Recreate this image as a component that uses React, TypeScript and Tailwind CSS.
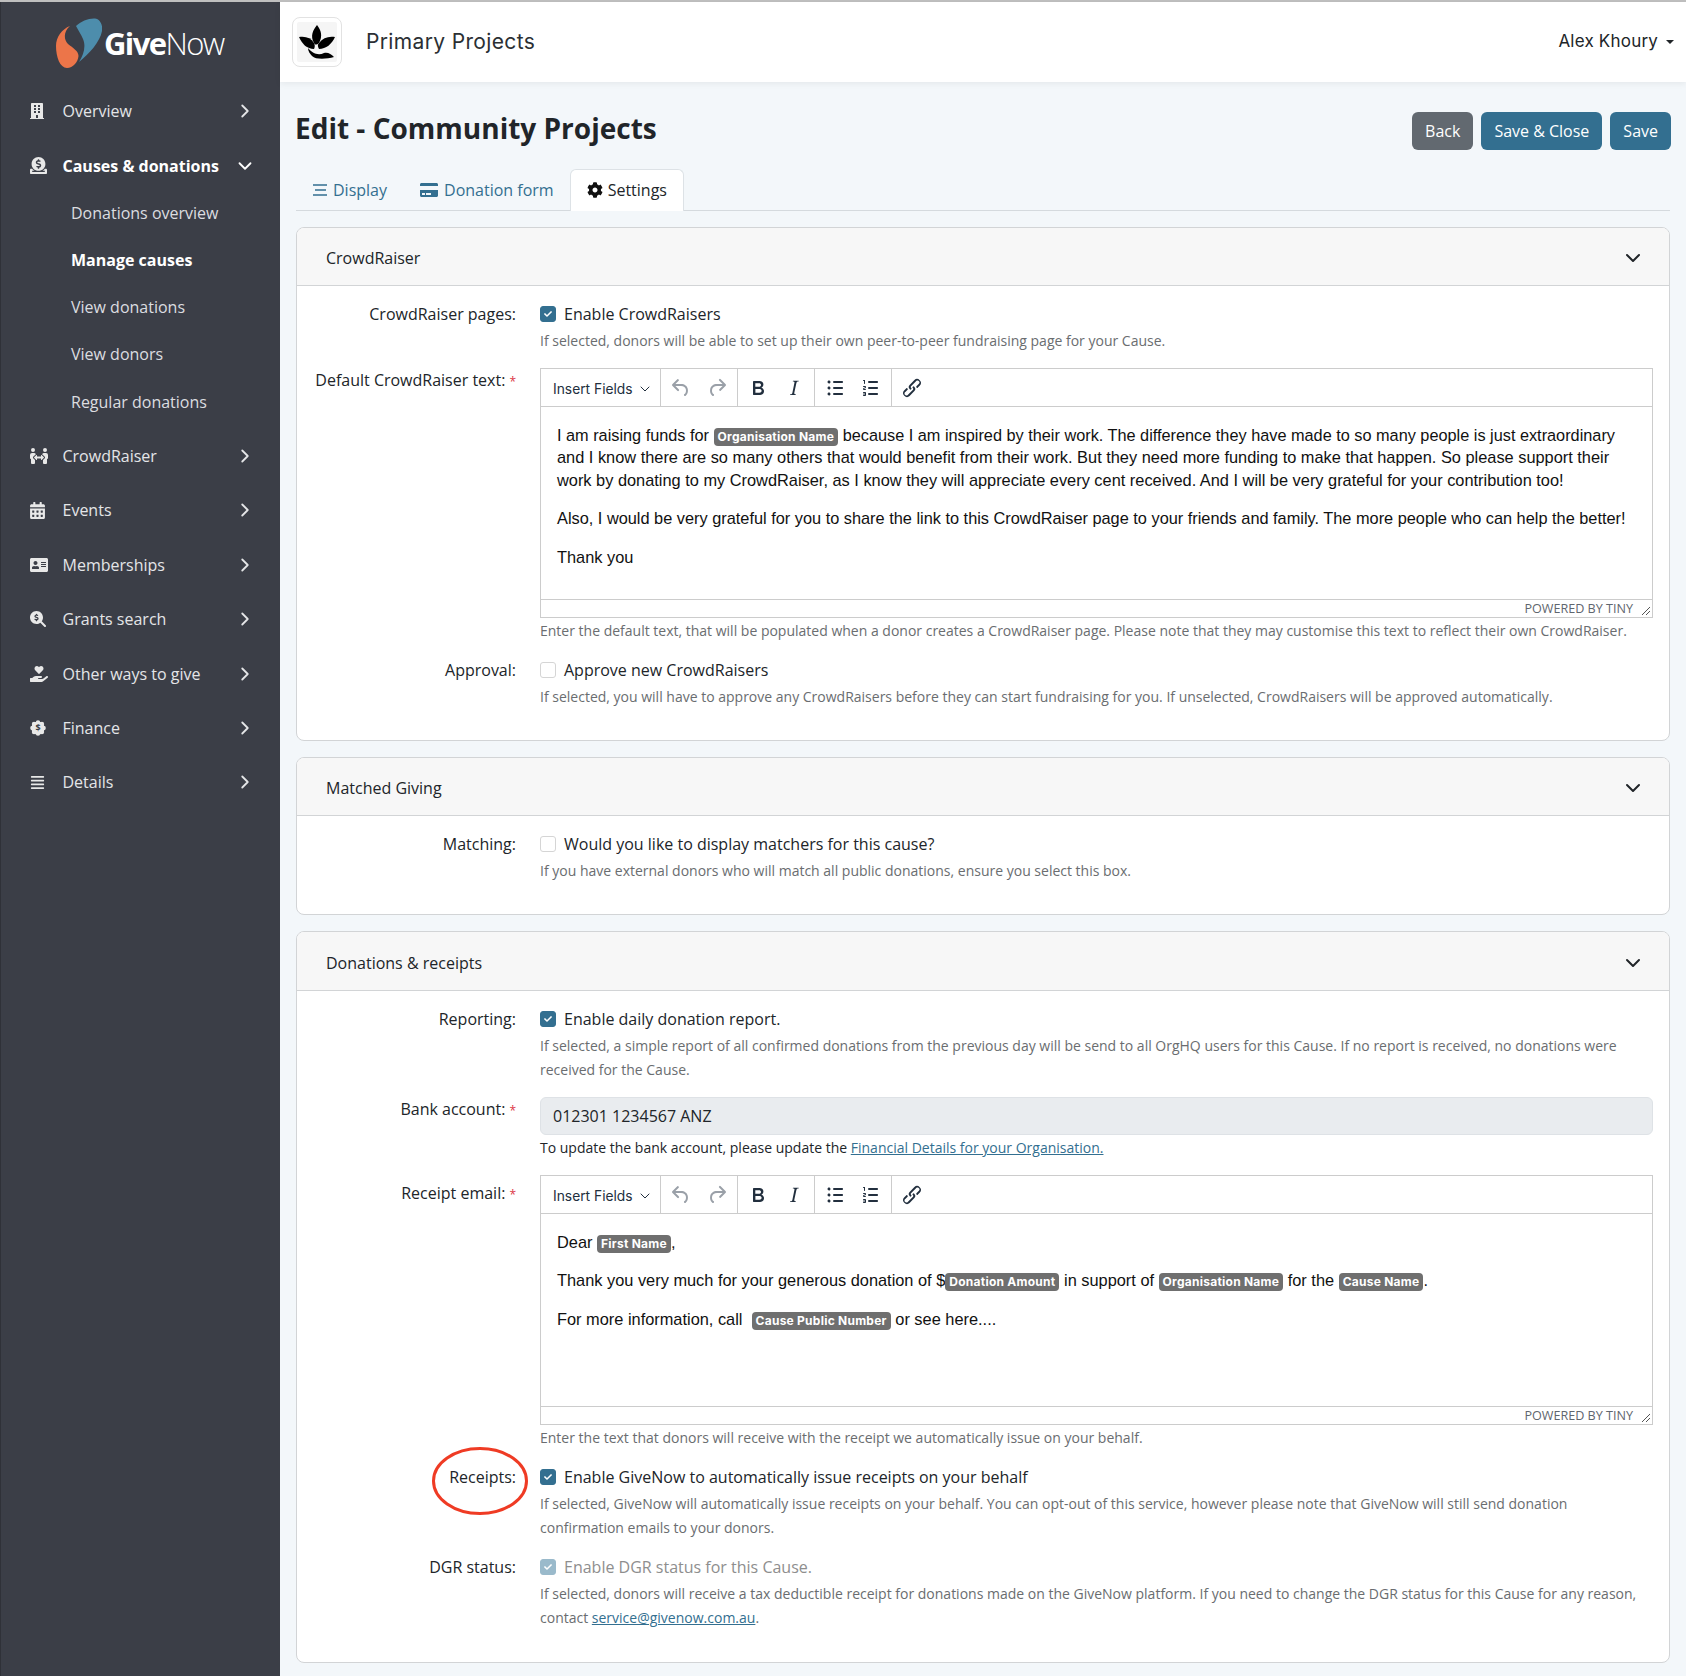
import React from "react";
import { ChevronDown, ChevronRight } from "lucide-react";
import {
  FaBuilding, FaDonate, FaPeopleArrows, FaCalendarAlt, FaAddressCard,
  FaHandHoldingHeart, FaAlignJustify, FaCreditCard, FaCog, FaCheck,
} from "react-icons/fa";
import { FaMagnifyingGlassDollar } from "react-icons/fa6";

const tiny: Record<string, string> = {
  undo: "M6.4 8H12c3.7 0 6.2 2 6.8 5.1.6 2.7-.4 5.6-2.3 6.8a1 1 0 0 1-1-1.8c1.1-.6 1.8-2.7 1.4-4.6-.5-2.1-2.1-3.5-4.9-3.5H6.4l3.3 3.3a1 1 0 1 1-1.4 1.4l-5-5a1 1 0 0 1 0-1.4l5-5a1 1 0 0 1 1.4 1.4L6.4 8Z",
  redo: "M17.6 10H12c-2.8 0-4.4 1.4-4.9 3.5-.4 2 .3 4 1.4 4.6a1 1 0 1 1-1 1.8c-2-1.2-2.9-4.1-2.3-6.8.6-3 3-5.1 6.8-5.1h5.6l-3.3-3.3a1 1 0 1 1 1.4-1.4l5 5a1 1 0 0 1 0 1.4l-5 5a1 1 0 0 1-1.4-1.4l3.3-3.3Z",
  bold: "M7.8 19c-.3 0-.5 0-.6-.2l-.2-.5V5.7c0-.2 0-.4.2-.5l.6-.2h5c1.5 0 2.7.3 3.5 1 .7.6 1.1 1.4 1.1 2.5a3 3 0 0 1-.6 1.9c-.4.6-1 1-1.6 1.2.4.1.9.3 1.3.6s.8.7 1 1.2c.4.4.5 1 .5 1.6 0 1.3-.4 2.3-1.3 3-.8.7-2.1 1-3.8 1H7.8Zm5-8.3c.6 0 1.2-.1 1.6-.5.4-.3.6-.7.6-1.3 0-1.1-.8-1.7-2.3-1.7H9.3v3.5h3.4Zm.5 6c.7 0 1.3-.1 1.7-.4.4-.4.6-.9.6-1.5s-.2-1-.7-1.4c-.4-.3-1-.4-2-.4H9.4v3.8h4Z",
  italic: "m16.7 4.7-.1.9h-.3c-.6 0-1 0-1.4.3-.3.3-.4.6-.5 1.1l-2.1 9.8v.6c0 .5.4.8 1.4.8h.2l-.2.8H8l.2-.8h.2c1.1 0 1.8-.5 2-1.5l2-9.8.1-.5c0-.6-.4-.8-1.4-.8h-.3l.2-.9h5.8Z",
  bul: "M11 5h8c.6 0 1 .4 1 1s-.4 1-1 1h-8a1 1 0 0 1 0-2Zm0 6h8c.6 0 1 .4 1 1s-.4 1-1 1h-8a1 1 0 0 1 0-2Zm0 6h8c.6 0 1 .4 1 1s-.4 1-1 1h-8a1 1 0 0 1 0-2ZM4.5 6c0-.4.1-.8.4-1 .3-.4.7-.5 1.1-.5.4 0 .8.1 1 .4.4.3.5.7.5 1.1 0 .4-.1.8-.4 1-.3.4-.7.5-1.1.5-.4 0-.8-.1-1-.4-.4-.3-.5-.7-.5-1.1Zm0 6c0-.4.1-.8.4-1 .3-.4.7-.5 1.1-.5.4 0 .8.1 1 .4.4.3.5.7.5 1.1 0 .4-.1.8-.4 1-.3.4-.7.5-1.1.5-.4 0-.8-.1-1-.4-.4-.3-.5-.7-.5-1.1Zm0 6c0-.4.1-.8.4-1 .3-.4.7-.5 1.1-.5.4 0 .8.1 1 .4.4.3.5.7.5 1.1 0 .4-.1.8-.4 1-.3.4-.7.5-1.1.5-.4 0-.8-.1-1-.4-.4-.3-.5-.7-.5-1.1Z",
  num: "M10 17h8c.6 0 1 .4 1 1s-.4 1-1 1h-8a1 1 0 0 1 0-2Zm0-6h8c.6 0 1 .4 1 1s-.4 1-1 1h-8a1 1 0 0 1 0-2Zm0-6h8c.6 0 1 .4 1 1s-.4 1-1 1h-8a1 1 0 1 1 0-2ZM6 4v3.5c0 .3-.2.5-.5.5a.5.5 0 0 1-.5-.5V5h-.5a.5.5 0 0 1 0-1H6Zm-1 8.8.2.2h1.3c.3 0 .5.2.5.5s-.2.5-.5.5H4.9a1 1 0 0 1-.9-1V13c0-.4.3-.8.6-1l1.2-.4.2-.3a.2.2 0 0 0-.2-.2H4.5a.5.5 0 0 1-.5-.5c0-.3.2-.5.5-.5h1.6c.5 0 .9.4.9 1v.1c0 .4-.3.8-.6 1l-1.2.4-.2.3ZM7 17v2c0 .6-.4 1-1 1H4.5a.5.5 0 0 1 0-1h1.2c.2 0 .3-.1.3-.3 0-.2-.1-.3-.3-.3H4.4a.4.4 0 1 1 0-.8h1.3c.2 0 .3-.1.3-.3 0-.2-.1-.3-.3-.3H4.5a.5.5 0 1 1 0-1H6c.6 0 1 .4 1 1Z",
  link: "M6.2 12.3a1 1 0 0 1 1.4 1.4l-2 2a2 2 0 1 0 2.6 2.8l4.8-4.8a1 1 0 0 0 0-1.4 1 1 0 1 1 1.4-1.3 2.9 2.9 0 0 1 0 4L9.6 20a3.9 3.9 0 0 1-5.5-5.5l2-2Zm11.6-.6a1 1 0 0 1-1.4-1.4l2-2a2 2 0 1 0-2.6-2.8L11 10.3a1 1 0 0 0 0 1.4A1 1 0 1 1 9.6 13a2.9 2.9 0 0 1 0-4L14.4 4a3.9 3.9 0 0 1 5.5 5.5l-2 2Z",
};

function TinyBtn({ d, muted }: { d: string; muted?: boolean }) {
  return (
    <span className="w-[34px] h-[34px] flex items-center justify-center">
      <svg width="24" height="24" viewBox="0 0 24 24" fill={muted ? "#9aa0a8" : "#222f3e"} fillRule="evenodd">
        <path d={tiny[d]} />
      </svg>
    </span>
  );
}

function Section({ children }: { children: React.ReactNode }) {
  return <div className="flex gap-[2px] px-[3px] items-center border-l border-[#cccccc] h-full">{children}</div>;
}

function Tag({ children }: { children: React.ReactNode }) {
  return (
    <span className="inline-block align-baseline bg-[#6f6f6f] text-white rounded-[4px] px-[4px] text-[12px] leading-[18px] font-bold font-['Inter','Liberation_Sans',sans-serif] tracking-[0.25px]">
      {children}
    </span>
  );
}

function Editor({ children }: { children: React.ReactNode }) {
  return (
    <div className="border border-[#cccccc] bg-white h-[250px] flex flex-col">
      <div className="h-[38px] shrink-0 border-b border-[#cccccc] flex items-center">
        <div className="w-[119px] pl-[12px] pt-[3px] flex items-center text-[13.8px] text-[#222f3e] font-['Inter','Liberation_Sans',sans-serif]">
          <span className="whitespace-nowrap">Insert Fields</span>
          <ChevronDown size={16} strokeWidth={1.5} className="ml-[4px]" />
        </div>
        <Section><TinyBtn d="undo" muted /><TinyBtn d="redo" muted /></Section>
        <Section><TinyBtn d="bold" /><TinyBtn d="italic" /></Section>
        <Section><TinyBtn d="bul" /><TinyBtn d="num" /></Section>
        <div className="flex px-[3px] items-center border-l border-[#cccccc] h-full"><TinyBtn d="link" /></div>
      </div>
      <div className="flex-1 px-[16px] pt-[17px] text-[16.38px] leading-[22.4px] text-[#111111] font-['Liberation_Sans',sans-serif] overflow-hidden">
        {children}
      </div>
      <div className="h-[18px] shrink-0 border-t border-[#cccccc] flex items-center justify-end pr-[1px] text-[12.6px] leading-[15px] text-[#5f666e] font-['Open_Sans',sans-serif]">
        <span className="-mt-[1px]">POWERED BY TINY</span>
        <svg width="10" height="10" viewBox="0 0 10 10" className="ml-[8px] mt-[5px]" stroke="#555" strokeWidth="1" fill="none">
          <path d="M1 9 9 1M5 9 9 5" />
        </svg>
      </div>
    </div>
  );
}

function Check({ state }: { state: "on" | "off" | "disabled" }) {
  const cls =
    state === "on"
      ? "bg-[#336f90] border-[#336f90]"
      : state === "disabled"
      ? "bg-[#9abacb] border-[#9abacb]"
      : "bg-white border-[#d5d5d5]";
  return (
    <span className={`w-[16px] h-[16px] rounded-[3px] border flex items-center justify-center shrink-0 ${cls}`}>
      {state !== "off" && <FaCheck size={8} className="text-white" />}
    </span>
  );
}

function Row({ label, required, children, mark, labelPad = "" }: { label: string; required?: boolean; children: React.ReactNode; mark?: boolean; labelPad?: string }) {
  return (
    <div className="grid grid-cols-[219px_1fr] gap-x-[24px] mb-[15px] last:mb-0">
      <div className={`relative text-right text-[16px] leading-[24px] text-[#212529] ${labelPad}`}>
        {label}
        {required && <span className="text-[#dc3545] text-[12px] ml-[4px]">*</span>}
        {mark && (
          <svg width="98" height="72" viewBox="0 0 98 72" className="absolute right-[-13px] top-[-20px]" fill="none">
            <ellipse cx="49" cy="36" rx="46.5" ry="32.5" stroke="#ef3b24" strokeWidth="3" />
          </svg>
        )}
      </div>
      <div className="min-w-0">{children}</div>
    </div>
  );
}

function CheckLine({ state, text }: { state: "on" | "off" | "disabled"; text: string }) {
  return (
    <div className={`flex items-center gap-[8px] text-[16px] leading-[24px] ${state === "disabled" ? "text-[#8e8e8e]" : "text-[#212529]"}`}>
      <Check state={state} />
      <span>{text}</span>
    </div>
  );
}

function Help({ children, mt = "mt-[3px]" }: { children: React.ReactNode; mt?: string }) {
  return <p className={`${mt} text-[14px] leading-[24px] text-[#6a6d70]`}>{children}</p>;
}

function Card({ title, children, tall }: { title: string; children: React.ReactNode; tall?: boolean }) {
  return (
    <section className="border border-[#d2d4d6] rounded-lg bg-white mb-[16px] last:mb-0 overflow-hidden">
      <header className={`${tall ? "h-[59px] pt-[3px]" : "h-[58px] pt-[2px]"} bg-[#f7f7f7] border-b border-[#d2d4d6] flex items-center justify-between pl-[29px] pr-[24px] text-[16px] text-[#212529]`}>
        <span>{title}</span>
        <ChevronDown size={24} strokeWidth={2} className="text-[#212529]" />
      </header>
      <div className={`pt-[16px] ${tall ? "pb-[32px]" : "pb-[31px]"} pr-[16px]`}>{children}</div>
    </section>
  );
}

function NavItem({ icon, label, active }: { icon: React.ReactNode; label: string; active?: boolean }) {
  return (
    <div className={`h-[54.4px] flex items-center pl-[29px] pr-[24px] text-[16px] ${active ? "font-bold text-white" : "text-[#e4e5e7]"}`}>
      <span className="w-[32.5px] flex items-center text-[#e8e8e8]">{icon}</span>
      <span className="flex-1 whitespace-nowrap">{label}</span>
      {active ? <ChevronDown size={22} /> : <ChevronRight size={22} />}
    </div>
  );
}

function SubItem({ label, active, last }: { label: string; active?: boolean; last?: boolean }) {
  return (
    <div className={`h-[47px] flex items-center pl-[70px] text-[16px] ${last ? "mt-[1px]" : ""} ${active ? "font-bold text-white" : "text-[#dcdde0]"}`}>
      {label}
    </div>
  );
}

function BadgeDollar() {
  const bumps = [0, 45, 90, 135, 180, 225, 270, 315];
  return (
    <span className="relative flex items-center justify-center w-[16px] h-[16px]">
      <svg width="16" height="16" viewBox="0 0 16 16" fill="#e8e8e8">
        <circle cx="8" cy="8" r="6.6" />
        {bumps.map((a) => (
          <circle key={a} cx={8 + 5.6 * Math.cos((a * Math.PI) / 180)} cy={8 + 5.6 * Math.sin((a * Math.PI) / 180)} r="2.2" />
        ))}
      </svg>
      <span className="absolute text-[9px] font-bold text-[#3b3e47] leading-none">$</span>
    </span>
  );
}

function Logo() {
  return (
    <div className="h-[80px] pt-[2px] flex items-center pl-[55px]">
      <svg width="46" height="50" viewBox="0 0 46 50" className="shrink-0">
        <path fill="#4d8dac" d="M20 8C25 3 33 0 39 .5 44 1 47 7 46 13 44 24 33 36 23 44 28 36 30 28 27 21 25 16 22 12 20 8Z" />
        <path fill="#ec7549" d="M14 8C6 11 0 19 0 28 0 39 4 50 11 50 17 50 22 44 22.5 38 22.5 33 17 30 12 26 8 22 7 14 14 8Z" />
      </svg>
      <span className="ml-[2px] text-[31px] leading-none text-white tracking-[-1.6px] font-['Open_Sans',sans-serif]">
        <span className="font-bold">Give</span>
        <span className="font-light">Now</span>
      </span>
    </div>
  );
}

function Plant() {
  return (
    <svg width="38" height="38" viewBox="0 0 38 38">
      <g fill="#000">
        <path d="M19 2C23 7 25 13 21 20 19 22 17 22 16 20 12 13 15 7 19 2Z" />
        <path d="M1 14C8 13 13 15 16 20 17 22 17 24 16 26 9 26 4 21 1 14Z" />
        <path d="M37 14C30 13 25 15 21 20 19 22 20 24 21 26 28 26 34 21 37 14Z" />
        <path d="M10 25C14 30 20 33 26 30 30 29 33 31 36 34 29 36 18 37 14 33 12 31 10 28 10 25Z" />
      </g>
    </svg>
  );
}

function DisplayIcon() {
  return (
    <svg width="16" height="14" viewBox="0 0 16 14" stroke="#336f90" strokeWidth="1.6" fill="none">
      <path d="M1 2h14M3 7h11M1 12h14" />
    </svg>
  );
}

export default function App() {
  return (
    <div className="font-['Open_Sans',sans-serif] w-[1686px] min-h-[1676px] flex flex-col bg-[#f3f7fa]">
      <div className="h-[2px] bg-[#bfbfbf] shrink-0" />
      <div className="flex flex-1">
        <aside className="w-[280px] shrink-0 bg-[#3b3e47] border-l border-[#2f3138]">
          <Logo />
          <nav className="mt-[2px]">
            <NavItem icon={<FaBuilding size={16} className="-ml-[1px]" />} label="Overview" />
            <NavItem icon={<FaDonate size={17} />} label="Causes & donations" active />
            <div className="-mt-[3px] mb-[3px]">
              <SubItem label="Donations overview" />
              <SubItem label="Manage causes" active />
              <SubItem label="View donations" />
              <SubItem label="View donors" />
              <SubItem label="Regular donations" last />
            </div>
            <NavItem icon={<FaPeopleArrows size={18} />} label="CrowdRaiser" />
            <NavItem icon={<FaCalendarAlt size={17} className="-ml-[1px]" />} label="Events" />
            <NavItem icon={<FaAddressCard size={18} />} label="Memberships" />
            <NavItem icon={<FaMagnifyingGlassDollar size={16} />} label="Grants search" />
            <NavItem icon={<FaHandHoldingHeart size={18} />} label="Other ways to give" />
            <NavItem icon={<BadgeDollar />} label="Finance" />
            <NavItem icon={<FaAlignJustify size={15} />} label="Details" />
          </nav>
        </aside>

        <div className="flex-1 min-w-0">
          <header className="h-[80px] bg-white shadow-[0_2px_6px_rgba(0,0,0,0.06)] flex items-center pl-[12px] pr-[12px] relative">
            <div className="w-[50px] h-[50px] border border-[#e2e2e2] rounded-[8px] flex items-center justify-center">
              <div className="w-[40px] h-[40px] bg-[#f5f5f5] rounded-[2px] flex items-center justify-center">
                <Plant />
              </div>
            </div>
            <span className="ml-[24px] text-[21px] text-[#2b2f33] tracking-[0.35px] font-['Inter',sans-serif]">Primary Projects</span>
            <div className="ml-auto flex items-center text-[#212529] text-[17px] tracking-[0.2px] font-['Inter',sans-serif]">
              Alex Khoury
              <span className="ml-[8px] w-0 h-0 border-x-[4px] border-x-transparent border-t-[4px] border-t-[#212529]" />
            </div>
          </header>

          <main className="px-[16px] pb-[14px]">
            <div className="pt-[30px] flex justify-between h-[68px]">
              <h1 className="text-[28px] leading-[38px] font-bold text-[#212529] -mt-[3px] -ml-[1px]">Edit - Community Projects</h1>
              <div className="flex gap-[8px] text-[16px] text-white -mr-[1px]">
                <button className="h-[38px] px-[13px] rounded-[6px] bg-[#626970]">Back</button>
                <button className="h-[38px] px-[13px] rounded-[6px] bg-[#336f90]">Save &amp; Close</button>
                <button className="h-[38px] px-[13px] rounded-[6px] bg-[#336f90]">Save</button>
              </div>
            </div>

            <div className="mt-[19px] h-[42px] border-b border-[#d5dade] flex text-[16px] text-[#336f90] mb-[16px]">
              <div className="px-[16px] flex items-center gap-[5px]"><DisplayIcon /> Display</div>
              <div className="ml-[1px] px-[16px] flex items-center gap-[6px]"><FaCreditCard size={18} /> Donation form</div>
              <div className="px-[16px] h-[42px] pb-[1px] flex items-center gap-[5px] bg-white border border-b-0 border-[#dde2e6] rounded-t-md text-[#212529]"><FaCog size={16} className="text-[#111]" /> Settings</div>
            </div>

            <Card title="CrowdRaiser">
              <Row label="CrowdRaiser pages:">
                <CheckLine state="on" text="Enable CrowdRaisers" />
                <Help>If selected, donors will be able to set up their own peer-to-peer fundraising page for your Cause.</Help>
              </Row>
              <Row label="Default CrowdRaiser text:" required>
                <Editor>
                  <p className="whitespace-nowrap">
                    <span className="text-[16.3px]">I am raising funds for <Tag>Organisation Name</Tag> because I am inspired by their work. The difference they have made to so many people is just extraordinary</span><br />
                    and I know there are so many others that would benefit from their work. But they need more funding to make that happen. So please support their<br />
                    work by donating to my CrowdRaiser, as I know they will appreciate every cent received. And I will be very grateful for your contribution too!
                  </p>
                  <p className="mt-[16px] whitespace-nowrap text-[16.33px]">Also, I would be very grateful for you to share the link to this CrowdRaiser page to your friends and family. The more people who can help the better!</p>
                  <p className="mt-[16px]">Thank you</p>
                </Editor>
                <Help mt="mt-[1px]">Enter the default text, that will be populated when a donor creates a CrowdRaiser page. Please note that they may customise this text to reflect their own CrowdRaiser.</Help>
              </Row>
              <Row label="Approval:">
                <CheckLine state="off" text="Approve new CrowdRaisers" />
                <Help>If selected, you will have to approve any CrowdRaisers before they can start fundraising for you. If unselected, CrowdRaisers will be approved automatically.</Help>
              </Row>
            </Card>

            <Card title="Matched Giving">
              <Row label="Matching:">
                <CheckLine state="off" text="Would you like to display matchers for this cause?" />
                <Help>If you have external donors who will match all public donations, ensure you select this box.</Help>
              </Row>
            </Card>

            <Card title="Donations & receipts" tall>
              <Row label="Reporting:">
                <CheckLine state="on" text="Enable daily donation report." />
                <Help>If selected, a simple report of all confirmed donations from the previous day will be send to all OrgHQ users for this Cause. If no report is received, no donations were received for the Cause.</Help>
              </Row>
              <Row label="Bank account:" required>
                <div className="h-[38px] bg-[#e9ecef] border border-[#dee2e6] rounded-md px-[12px] flex items-center text-[16px] text-[#212529]">012301 1234567 ANZ</div>
                <Help mt="mt-[1px]">
                  <span className="text-[#212529]">To update the bank account, please update the </span>
                  <a className="text-[#336f90] underline">Financial Details for your Organisation.</a>
                </Help>
              </Row>
              <Row label="Receipt email:" required labelPad="pt-[6px]">
                <Editor>
                  <p>Dear <Tag>First Name</Tag>,</p>
                  <p className="mt-[16px]">Thank you very much for your generous donation of $<Tag>Donation Amount</Tag> in support of <Tag>Organisation Name</Tag> for the <Tag>Cause Name</Tag>.</p>
                  <p className="mt-[16px]">For more information, call &nbsp;<Tag>Cause Public Number</Tag> or see here....</p>
                </Editor>
                <Help mt="mt-[1px]">Enter the text that donors will receive with the receipt we automatically issue on your behalf.</Help>
              </Row>
              <Row label="Receipts:" mark>
                <CheckLine state="on" text="Enable GiveNow to automatically issue receipts on your behalf" />
                <Help>If selected, GiveNow will automatically issue receipts on your behalf. You can opt-out of this service, however please note that GiveNow will still send donation confirmation emails to your donors.</Help>
              </Row>
              <Row label="DGR status:">
                <CheckLine state="disabled" text="Enable DGR status for this Cause." />
                <Help>
                  If selected, donors will receive a tax deductible receipt for donations made on the GiveNow platform. If you need to change the DGR status for this Cause for any reason, contact{" "}
                  <a className="text-[#336f90] underline">service@givenow.com.au</a>.
                </Help>
              </Row>
            </Card>
          </main>
        </div>
      </div>
    </div>
  );
}
